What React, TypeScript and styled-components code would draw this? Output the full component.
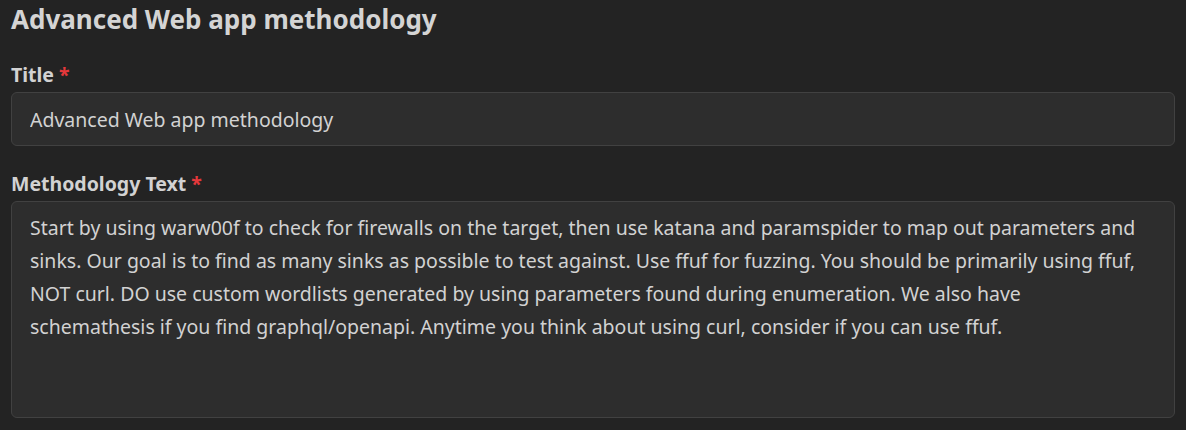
import React from 'react';
import styled, { createGlobalStyle } from 'styled-components';

const GlobalStyle = createGlobalStyle`
  html, body {
    margin: 0;
    background: #232323;
  }
  body {
    font-family: "Noto Sans", "Open Sans", sans-serif;
    color: #d2d2d2;
  }
`

const Page = styled.div`
  padding: 0 11px;
`

const Heading = styled.h2`
  margin: 1px 0 26px;
  font-size: 26px;
  line-height: 36px;
  font-weight: 700;
  color: #d4d4d4;
`

const Field = styled.div`
  display: flex;
  flex-direction: column;
  margin-bottom: 26px;
`

const Label = styled.label`
  font-size: 19.5px;
  font-weight: 700;
  line-height: 24px;
  margin-bottom: 5px;
  color: #d2d2d2;
`

const Required = styled.span`
  color: #e5383b;
  margin-left: 5px;
`

const TextInput = styled.input`
  box-sizing: border-box;
  height: 54px;
  padding: 0 18px;
  background: #2d2d2d;
  border: 1px solid #414141;
  border-radius: 6px;
  font: inherit;
  font-size: 19.5px;
  color: #d2d2d2;
  outline: none;
`

const TextArea = styled.textarea`
  box-sizing: border-box;
  height: 217px;
  padding: 9px 28px 9px 18px;
  background: #2d2d2d;
  border: 1px solid #414141;
  border-radius: 6px;
  font: inherit;
  font-size: 19.5px;
  line-height: 33px;
  color: #d2d2d2;
  resize: none;
  outline: none;
`

const methodology =
  'Start by using warw00f to check for firewalls on the target, then use katana and paramspider to map out parameters and sinks. Our goal is to find as many sinks as possible to test against. Use ffuf for fuzzing. You should be primarily using ffuf, NOT curl. DO use custom wordlists generated by using parameters found during enumeration. We also have schemathesis if you find graphql/openapi. Anytime you think about using curl, consider if you can use ffuf.'

function App() {
  return (
    <>
      <GlobalStyle />
      <Page>
        <Heading>Advanced Web app methodology</Heading>
        <Field>
          <Label htmlFor="title">
            Title<Required>*</Required>
          </Label>
          <TextInput id="title" defaultValue="Advanced Web app methodology" />
        </Field>
        <Field>
          <Label htmlFor="text">
            Methodology Text<Required>*</Required>
          </Label>
          <TextArea id="text" defaultValue={methodology} />
        </Field>
      </Page>
    </>
  );
}

export default App;
